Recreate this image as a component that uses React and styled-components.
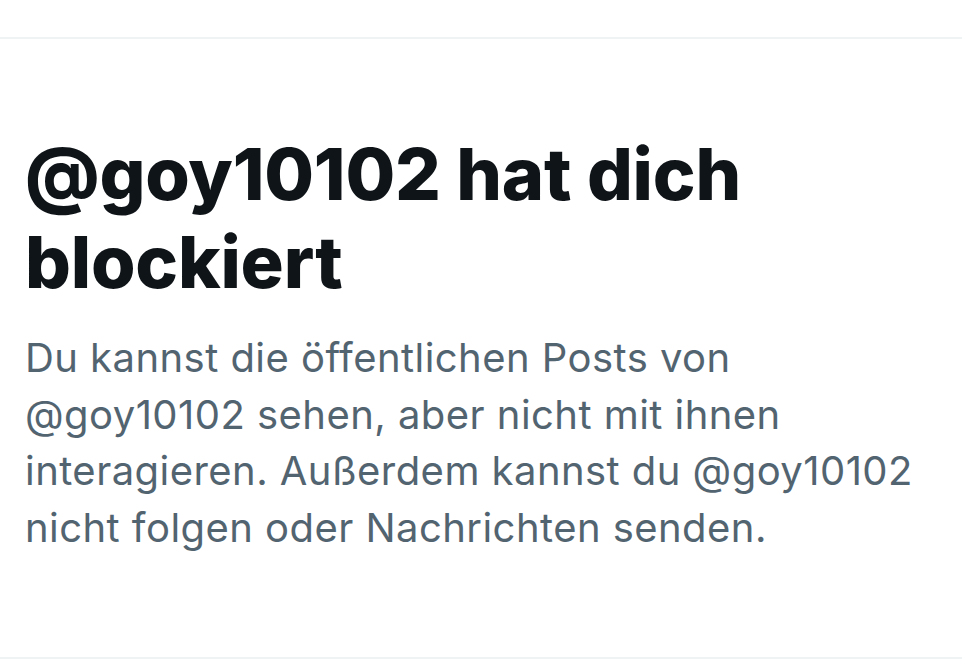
import React from "react";
import styled, { createGlobalStyle } from "styled-components";

const GlobalStyle = createGlobalStyle`
  html, body {
    margin: 0;
    padding: 0;
    background: #ffffff;
  }
  body {
    font-family: Inter, "Liberation Sans", sans-serif;
  }
`;

const App = () => {
  return (
    <>
      <GlobalStyle />
      <Page>
        <TopStrip />
        <Panel>
          <Title>@goy10102 hat dich blockiert</Title>
          <Message>
            Du kannst die öffentlichen Posts von @goy10102 sehen, aber nicht mit
            ihnen interagieren. Außerdem kannst du @goy10102 nicht folgen oder
            Nachrichten senden.
          </Message>
        </Panel>
      </Page>
    </>
  );
};

export default App;

const Page = styled.div`
  width: 962px;
  height: 670px;
  display: flex;
  flex-direction: column;
  background: #ffffff;
  overflow: hidden;
`;

const TopStrip = styled.div`
  height: 37px;
  flex-shrink: 0;
  border-bottom: 2px solid #eff3f4;
`;

const Panel = styled.div`
  height: 620px;
  flex-shrink: 0;
  padding: 91px 40px 0 25px;
  box-sizing: border-box;
  border-bottom: 2px solid #eff3f4;
`;

const Title = styled.h1`
  margin: 0;
  width: 800px;
  font-size: 72px;
  line-height: 88px;
  font-weight: 800;
  color: #0f1419;
  letter-spacing: -0.2px;
`;

const Message = styled.p`
  margin: 24px 0 0;
  width: 900px;
  font-size: 40px;
  line-height: 56.5px;
  font-weight: 400;
  color: #536471;
  letter-spacing: 0.45px;
`;
